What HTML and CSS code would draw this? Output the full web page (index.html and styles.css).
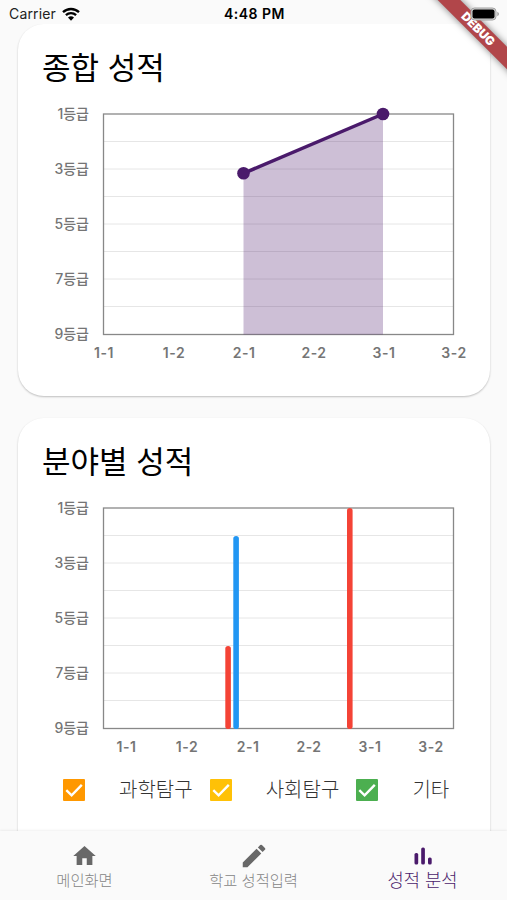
FILE: index.html
```html
<!DOCTYPE html>
<html lang="ko">

<head>
    <meta charset="UTF-8">
    <meta name="viewport" content="width=device-width, initial-scale=1.0">
    <title>성적 분석</title>
    <link rel="stylesheet" href="styles.css">
</head>

<body>
    <div class="app">
        <header class="status-bar">
            <div class="carrier">
                <span>Carrier</span>
                <svg class="wifi" width="18" height="14" viewBox="0 0 18 14">
                    <path d="M1 5.2A11.6 11.6 0 0 1 17 5.2" />
                    <path d="M3.9 8.2A7.4 7.4 0 0 1 14.1 8.2" />
                    <path class="wifi-dot" d="M6 10.6A4.3 4.3 0 0 1 12 10.6L9 13.7Z" />
                </svg>
            </div>
            <div class="time">4:48 PM</div>
            <svg class="battery" width="30" height="14" viewBox="0 0 30 14">
                <rect class="battery-case" x="1" y="1" width="25" height="12" rx="3.5" />
                <rect x="2.5" y="2.5" width="22" height="9" rx="2" />
                <path class="battery-tip" d="M27.3 4.8Q29 5.5 29 7T27.3 9.2Z" />
            </svg>
        </header>

        <main class="content">
            <section class="card">
                <h2>종합 성적</h2>
                <svg class="chart" width="472" height="272" viewBox="0 0 472 272">
                    <path class="grid" d="M86 47.5H435M86 75H435M86 102.5H435M86 130H435M86 157.5H435M86 185H435M86 212.5H435" />
                    <rect class="frame" x="85.5" y="20" width="350" height="220.5" />
                    <path class="area" d="M225.5 79.3L365 20V240.5H225.5Z" />
                    <path class="line" d="M225.5 79.3L365 20" />
                    <circle class="dot" cx="225.5" cy="79.3" r="6.3" />
                    <circle class="dot" cx="365" cy="20" r="6.3" />
                    <g class="y-labels">
                        <text x="71" y="24.5">1등급</text>
                        <text x="71" y="79.5">3등급</text>
                        <text x="71" y="134.5">5등급</text>
                        <text x="71" y="189.5">7등급</text>
                        <text x="71" y="244.5">9등급</text>
                    </g>
                    <g class="x-labels">
                        <text x="86" y="264">1-1</text>
                        <text x="156" y="264">1-2</text>
                        <text x="226" y="264">2-1</text>
                        <text x="296" y="264">2-2</text>
                        <text x="366" y="264">3-1</text>
                        <text x="436" y="264">3-2</text>
                    </g>
                </svg>
            </section>

            <section class="card">
                <h2>분야별 성적</h2>
                <svg class="chart" width="472" height="272" viewBox="0 0 472 272">
                    <path class="grid" d="M86 47.5H435M86 75H435M86 102.5H435M86 130H435M86 157.5H435M86 185H435M86 212.5H435" />
                    <rect class="frame" x="85.5" y="20" width="350" height="220.5" />
                    <rect class="bar-red" x="207.3" y="158" width="5.6" height="83" rx="2.8" />
                    <rect class="bar-blue" x="215.3" y="48" width="5.6" height="193" rx="2.8" />
                    <rect class="bar-red" x="329" y="20" width="5.6" height="221" rx="2.8" />
                    <g class="y-labels">
                        <text x="71" y="24.5">1등급</text>
                        <text x="71" y="79.5">3등급</text>
                        <text x="71" y="134.5">5등급</text>
                        <text x="71" y="189.5">7등급</text>
                        <text x="71" y="244.5">9등급</text>
                    </g>
                    <g class="x-labels">
                        <text x="108.5" y="264">1-1</text>
                        <text x="169" y="264">1-2</text>
                        <text x="230" y="264">2-1</text>
                        <text x="291" y="264">2-2</text>
                        <text x="352" y="264">3-1</text>
                        <text x="413" y="264">3-2</text>
                    </g>
                </svg>
                <div class="legend">
                    <div class="legend-item">
                        <svg class="check orange" viewBox="0 0 22 22"><path d="M3.3 11.2L8.6 16.3L18.8 5.8" /></svg>
                        <span>과학탐구</span>
                    </div>
                    <div class="legend-item">
                        <svg class="check amber" viewBox="0 0 22 22"><path d="M3.3 11.2L8.6 16.3L18.8 5.8" /></svg>
                        <span>사회탐구</span>
                    </div>
                    <div class="legend-item">
                        <svg class="check green" viewBox="0 0 22 22"><path d="M3.3 11.2L8.6 16.3L18.8 5.8" /></svg>
                        <span>기타</span>
                    </div>
                </div>
            </section>
        </main>

        <nav class="bottom-nav">
            <a class="nav-item">
                <svg width="27" height="28" viewBox="0 0 24 24"><path d="M10 20v-6h4v6h5v-8h3L12 3 2 12h3v8z" /></svg>
                <span>메인화면</span>
            </a>
            <a class="nav-item">
                <svg width="30" height="30" viewBox="0 0 24 24"><path d="M3 17.25V21h3.75L17.81 9.94l-3.75-3.75L3 17.25zM20.71 7.04a1 1 0 0 0 0-1.41l-2.34-2.34a1 1 0 0 0-1.41 0l-1.83 1.83 3.75 3.75 1.83-1.83z" /></svg>
                <span>학교 성적입력</span>
            </a>
            <a class="nav-item active">
                <svg width="18" height="18" viewBox="0 0 18 18">
                    <rect x="0.5" y="6" width="3.7" height="11.5" rx="1.6" />
                    <rect x="7.2" y="0.5" width="3.7" height="17" rx="1.6" />
                    <rect x="14" y="10.5" width="3.7" height="7" rx="1.6" />
                </svg>
                <span>성적 분석</span>
            </a>
        </nav>

        <div class="debug">DEBUG</div>
    </div>
</body>

</html>
```

FILE: styles.css
```css
* {
    box-sizing: border-box;
}

body {
    margin: 0;
    background-color: #fafafa;
    color: #000;
    font-family: Inter, "Noto Sans CJK KR", sans-serif;
}

.app {
    position: relative;
    display: flex;
    flex-direction: column;
    height: 900px;
    overflow: hidden;
}

.status-bar {
    display: grid;
    grid-template-columns: 1fr auto 1fr;
    align-items: center;
    flex: none;
    height: 24px;
    padding: 3px 7px 0 9px;
    font-size: 14px;
}

.carrier {
    display: flex;
    align-items: center;
    gap: 6px;
    color: #222;
    letter-spacing: 0.15px;
}

.wifi {
    fill: none;
    stroke: #000;
    stroke-width: 2.3;
}

.wifi-dot {
    fill: #000;
    stroke: none;
}

.time {
    font-weight: 600;
    letter-spacing: 0.5px;
}

/* stays above the ribbon */
.battery {
    position: relative;
    z-index: 2;
    justify-self: end;
}

.battery-case {
    fill: #d5d5d5;
    stroke: #a0a0a0;
}

.battery-tip {
    fill: #a0a0a0;
}

.content {
    display: flex;
    flex-direction: column;
    flex: 1;
    gap: 22px;
    min-height: 0;
    padding: 0 17px 0 18px;
    overflow: hidden;
}

.card {
    flex: none;
    height: 372px;
    background: #fff;
    border-radius: 26px;
    box-shadow: 0 1px 2px rgba(0, 0, 0, 0.24);
}

.card:last-child {
    height: 460px;
}

h2 {
    height: 70px;
    margin: 0;
    padding: 21px 0 0 24px;
    font-size: 31px;
    font-weight: 400;
    line-height: 46px;
}

.chart {
    display: block;
}

.grid {
    fill: none;
    stroke: #e6e6e6;
}

.frame {
    fill: none;
    stroke: #888;
    stroke-width: 1.3;
}

.area {
    fill: #4a1a6b;
    fill-opacity: 0.28;
}

.line {
    fill: none;
    stroke: #4a1a6b;
    stroke-width: 3.5;
}

.dot {
    fill: #4a1a6b;
}

.bar-red {
    fill: #f44336;
}

.bar-blue {
    fill: #2196f3;
}

.y-labels,
.x-labels {
    fill: #757575;
    font-size: 14px;
    font-weight: 600;
}

.y-labels {
    text-anchor: end;
    font-weight: 500;
}

.x-labels {
    text-anchor: middle;
    letter-spacing: 0.5px;
}

.legend {
    display: flex;
    padding: 10px 0 0 45px;
}

.legend-item {
    display: flex;
    align-items: center;
    flex: none;
    gap: 34px;
    width: 146.7px;
    height: 40px;
    color: #333;
    font-size: 20px;
    font-weight: 300;
}

.legend-item span {
    margin-top: -3px;
}

.check {
    width: 22px;
    height: 22px;
    border-radius: 1px;
    fill: none;
    stroke: #fff;
    stroke-width: 2.4;
}

.orange {
    background: #ff9800;
}

.amber {
    background: #ffc107;
}

.green {
    background: #4caf50;
}

.bottom-nav {
    position: relative;
    display: flex;
    flex: none;
    height: 69px;
    background: #fafafa;
    box-shadow: 0 -1px 2px rgba(0, 0, 0, 0.06);
}

.nav-item {
    display: grid;
    grid-template-rows: 30px 20px;
    flex: 1 1 0;
    align-content: start;
    place-items: center;
    padding-top: 10px;
    color: #858585;
    fill: #686868;
    font-size: 15.3px;
    font-weight: 300;
    line-height: 20px;
}

.nav-item span {
    white-space: nowrap;
}

.active {
    color: #4a1a6b;
    fill: #4a1a6b;
    font-size: 17.7px;
}

/* corner ribbon over the status bar */
.debug {
    position: absolute;
    top: 21px;
    right: -41px;
    width: 140px;
    height: 16px;
    background: #b1464a;
    box-shadow: 0 0 7px rgba(0, 0, 0, 0.5);
    color: #fff;
    font-size: 12px;
    font-weight: 900;
    line-height: 16px;
    text-align: center;
    transform: rotate(45deg);
}
```
